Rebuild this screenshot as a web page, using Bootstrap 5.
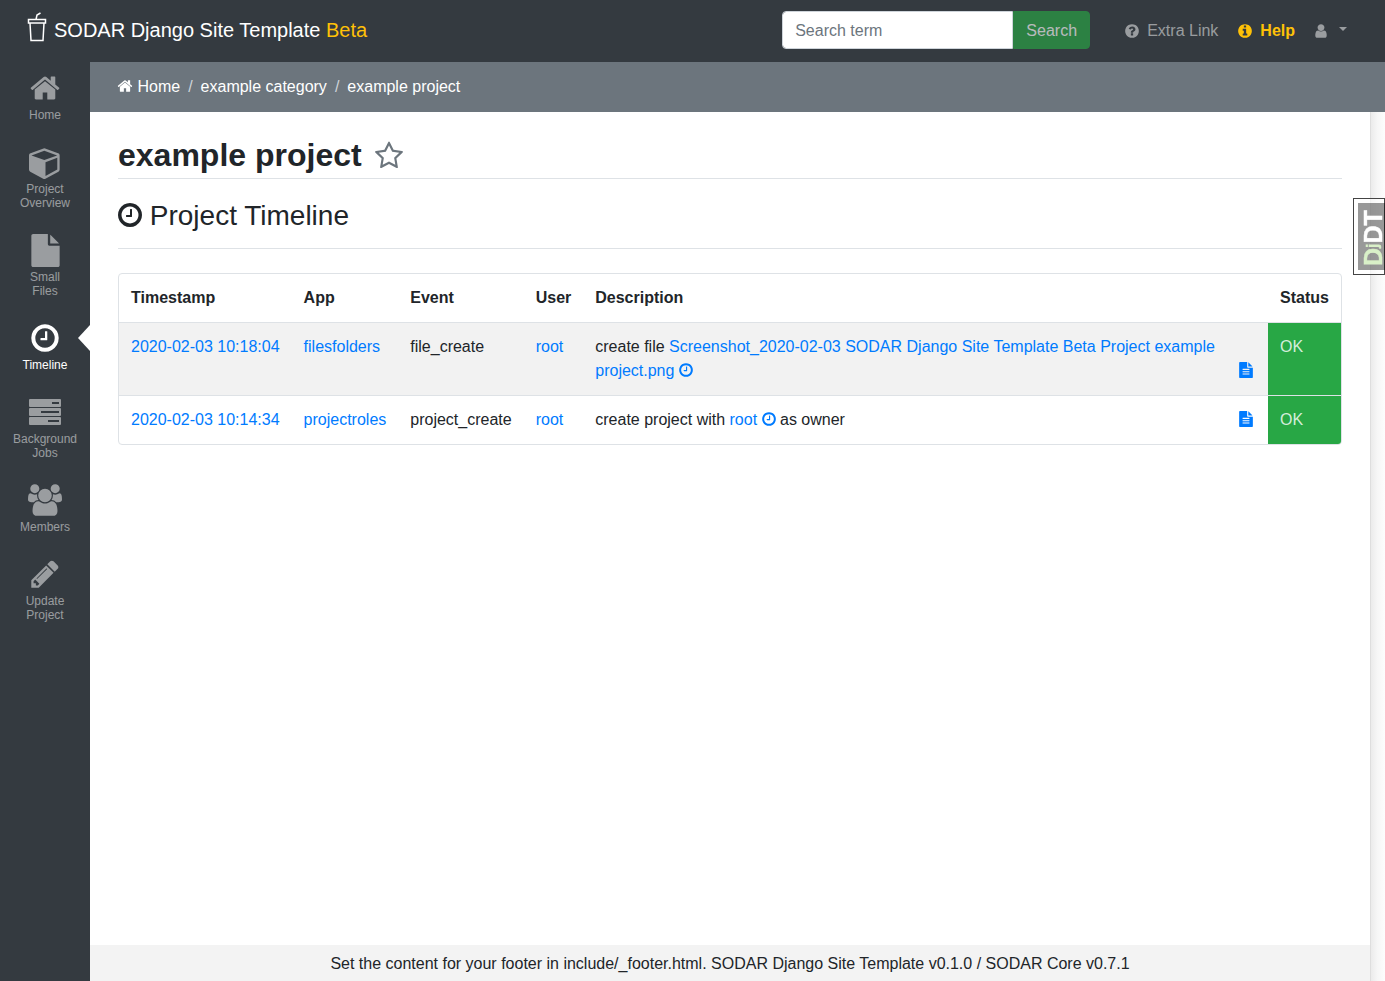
<!DOCTYPE html>
<html lang="en">

<head>
    <meta charset="UTF-8">
    <meta name="viewport" content="width=device-width, initial-scale=1.0">
    <title>Project Timeline</title>
    <link href="https://cdn.jsdelivr.net/npm/bootstrap@5.3.0/dist/css/bootstrap.min.css" rel="stylesheet">
    <style>
        html, body {
            height: 100%;
            overflow: hidden;
        }

        body {
            font-family: "Liberation Sans", Arial, sans-serif;
            font-size: 16px;
            color: #212529;
        }

        a {
            color: #007bff;
            text-decoration: none;
        }

        .fa-icon {
            fill: currentColor;
            vertical-align: -2px;
        }

        .top-bar {
            height: 62px;
            background: #343a40;
            padding: 0 38px 2px 27px;
        }

        .brand-link {
            color: #fff;
            font-size: 20px;
        }

        .beta-text {
            color: #ffc107;
        }

        .cup-logo {
            width: 20px;
            height: 30px;
            margin: 0 7px 6px 0;
        }

        .search-input {
            width: 231px;
            height: 38px;
            border-radius: 4px 0 0 4px;
            font-size: 16px;
            padding: 7px 12px 5px;
            color: #495057;
            border-color: #ced4da;
        }

        .search-input::placeholder {
            color: #6c757d;
        }

        .search-btn,
        .search-btn:disabled {
            background: #28a745;
            border-color: #28a745;
            color: #fff;
            width: 77px;
            height: 38px;
            border-radius: 0 4px 4px 0;
            padding: 2px 0 0;
        }

        .top-link {
            color: rgba(255, 255, 255, .5);
        }

        .help-link {
            color: #ffc107;
            font-weight: 700;
        }

        .extra-gap {
            margin: 2px 0 0 34px;
            gap: 7px;
        }

        .item-gap {
            margin: 2px 0 0 19px;
            gap: 7px;
        }

        .user-gap {
            margin: 2px 0 0 18px;
            gap: 10px;
        }

        .caret-mark {
            display: inline-block;
            border-top: 4.8px solid rgba(255, 255, 255, .5);
            border-left: 4.8px solid transparent;
            border-right: 4.8px solid transparent;
        }

        .main-area {
            height: calc(100vh - 62px);
        }

        .side-nav {
            width: 90px;
            background: #343a40;
            padding-top: 6px;
        }

        .side-link {
            position: relative;
            display: block;
            height: 74px;
            padding-top: 4px;
            text-align: center;
            color: rgba(255, 255, 255, .5);
            font-size: 12px;
            line-height: 14px;
        }

        .side-icon {
            display: flex;
            align-items: center;
            justify-content: center;
            height: 32px;
            margin-bottom: 4px;
        }

        .side-icon svg {
            fill: currentColor;
            flex-shrink: 0;
        }

        .side-tall {
            height: 88px;
        }

        .side-active {
            color: #fff;
        }

        .side-active::after {
            content: "";
            position: absolute;
            right: 0;
            top: 7px;
            border-top: 13px solid transparent;
            border-bottom: 13px solid transparent;
            border-right: 12px solid #fff;
        }

        .page-col {
            min-width: 0;
        }

        .crumb-bar {
            height: 50px;
            background: #6c757d;
            color: #fff;
            padding: 0 27px;
        }

        .crumb-bar a {
            color: #fff;
        }

        .crumb-sep {
            color: #ced4da;
            padding: 0 8px;
        }

        .work-row {
            min-height: 0;
        }

        .work-area {
            min-width: 0;
        }

        .page-scroll {
            width: 15px;
            background: linear-gradient(to right, #ebebeb, #f6f6f6 45%, #fdfdfd);
            border-left: 1px solid #dedede;
        }

        .page-content {
            padding: 0 28px;
        }

        .project-title {
            height: 67px;
            padding-top: 24px;
            margin: 0;
            font-size: 32px;
            font-weight: 700;
            line-height: 38px;
            border-bottom: 1px solid #dee2e6;
        }

        .star-mark {
            color: #6c757d;
            margin-left: 3px;
            vertical-align: -5px;
        }

        .timeline-title {
            height: 70px;
            padding-top: 20px;
            margin: 0 0 24px;
            font-size: 28px;
            font-weight: 400;
            line-height: 34px;
            border-bottom: 1px solid #dee2e6;
        }

        .title-clock {
            margin: 0 -2px;
            vertical-align: -4px;
        }

        .event-clock {
            margin: 0 -1px;
        }

        .timeline-box {
            border: 1px solid #dee2e6;
            border-radius: 4px;
            overflow: hidden;
        }

        .event-table {
            margin: 0;
            --bs-table-bg: transparent;
            color: #212529;
        }

        .event-table th,
        .event-table td {
            padding: 12px;
            line-height: 24px;
            border: 0;
            white-space: nowrap;
            width: 1%;
        }

        .event-table thead th {
            border-bottom: 1px solid #dee2e6;
        }

        .event-table tbody tr + tr td {
            border-top: 1px solid #dee2e6;
        }

        .event-table .desc-cell {
            width: auto;
            white-space: normal;
            padding-right: 14px;
        }

        .striped-row td {
            background: #f2f2f2;
        }

        .event-table .status-ok {
            background: #28a745;
            color: #d4edda;
            min-width: 73px;
        }

        .file-mark {
            color: #007bff;
            flex-shrink: 0;
            margin-bottom: 5px;
        }

        .site-footer {
            height: 36px;
            padding-top: 2px;
            background: #f3f3f3;
            color: #212529;
        }

        .djdt-handle {
            position: fixed;
            top: 198px;
            right: 0;
            width: 32px;
            height: 77px;
            border: 1px solid #444;
            background: rgba(255, 255, 255, .6);
            padding: 4px 0 4px 4px;
        }

        .djdt-inner {
            display: flex;
            align-items: center;
            justify-content: center;
            height: 100%;
            padding: 0 3px 4px 0;
            background: rgba(0, 0, 0, .4);
            color: #fff;
            font-size: 25px;
            font-weight: 700;
            line-height: 1;
            -webkit-text-stroke: .4px;
            writing-mode: vertical-rl;
            transform: rotate(180deg);
        }

        .djdt-inner span {
            color: #d9f0c8;
        }

        .djdt-inner small {
            font-size: 16px;
        }
    </style>
</head>

<body>
    <svg width="0" height="0" class="position-absolute">
        <defs>
            <symbol id="i-home" viewBox="0 0 1792 1792"><path d="M1472 992v480q0 26-19 45t-45 19h-384v-384h-256v384h-384q-26 0-45-19t-19-45v-480q0-1 .5-3t.5-3l575-474 575 474q1 2 1 6zm223-69l-62 74q-8 9-21 11h-3q-13 0-21-7l-692-577-692 577q-12 8-24 7-13-2-21-11l-62-74q-8-10-7-23.500t11-21.500l719-599q32-26 76-26t76 26l244 204v-195q0-14 9-23t23-9h192q14 0 23 9t9 23v408l219 182q10 8 11 21.500t-7 23.500z"/></symbol>
            <symbol id="i-clock" viewBox="0 0 1792 1792"><path d="M1024 544v448q0 14-9 23t-23 9h-320q-14 0-23-9t-9-23v-64q0-14 9-23t23-9h224v-352q0-14 9-23t23-9h64q14 0 23 9t9 23zm416 352q0-148-73-273t-198-198-273-73-273 73-198 198-73 273 73 273 198 198 273 73 273-73 198-198 73-273zm224 0q0 209-103 385.500t-279.500 279.500-385.500 103-385.500-103-279.500-279.500-103-385.500 103-385.500 279.500-279.500 385.500-103 385.500 103 279.500 279.500 103 385.500z"/></symbol>
            <symbol id="i-file" viewBox="0 0 1792 1792"><path d="M1152 512v-472q22 14 36 28l408 408q14 14 28 36h-472zm-128 32q0 40 28 68t68 28h544v1056q0 40-28 68t-68 28h-1344q-40 0-68-28t-28-68v-1600q0-40 28-68t68-28h800v544z"/></symbol>
            <symbol id="i-file-text" viewBox="0 0 1792 1792"><path d="M1596 476q14 14 28 36h-472v-472q22 14 36 28zm-476 164h544v1056q0 40-28 68t-68 28h-1344q-40 0-68-28t-28-68v-1600q0-40 28-68t68-28h800v544q0 40 28 68t68 28zm160 736v-64q0-14-9-23t-23-9h-704q-14 0-23 9t-9 23v64q0 14 9 23t23 9h704q14 0 23-9t9-23zm0-256v-64q0-14-9-23t-23-9h-704q-14 0-23 9t-9 23v64q0 14 9 23t23 9h704q14 0 23-9t9-23zm0-256v-64q0-14-9-23t-23-9h-704q-14 0-23 9t-9 23v64q0 14 9 23t23 9h704q14 0 23-9t9-23z"/></symbol>
            <symbol id="i-star" viewBox="0 0 1792 1792"><path d="M1201 1004l306-297-422-62-189-382-189 382-422 62 306 297-73 421 378-199 377 199zm527-357q0 22-26 48l-363 354 86 500q1 7 1 20 0 50-41 50-19 0-40-12l-449-236-449 236q-22 12-40 12-21 0-31.500-14.500t-10.500-35.500q0-6 2-20l86-500-364-354q-25-27-25-48 0-37 56-46l502-73 225-455q19-41 49-41t49 41l225 455 502 73q56 9 56 46z"/></symbol>
            <symbol id="i-question" viewBox="0 0 1792 1792"><path d="M1024 1376v-192q0-14-9-23t-23-9h-192q-14 0-23 9t-9 23v192q0 14 9 23t23 9h192q14 0 23-9t9-23zm256-672q0-88-55.500-163t-138.500-116-170-41q-243 0-371 213-15 24 8 42l132 100q7 6 19 6 16 0 25-12 53-68 86-92 34-24 86-24 48 0 85.500 26t37.500 59q0 38-20 61t-68 45q-63 28-115.500 86.500t-52.500 125.500v36q0 14 9 23t23 9h192q14 0 23-9t9-23q0-19 21.500-49.500t54.500-49.500q32-18 49-28.500t46-35 44.500-48 28-60.500 12.500-81zm384 192q0 209-103 385.500t-279.500 279.500-385.500 103-385.500-103-279.500-279.500-103-385.500 103-385.500 279.500-279.500 385.500-103 385.500 103 279.500 279.500 103 385.500z"/></symbol>
            <symbol id="i-info" viewBox="0 0 1792 1792"><path d="M1152 1376v-160q0-14-9-23t-23-9h-96v-512q0-14-9-23t-23-9h-320q-14 0-23 9t-9 23v160q0 14 9 23t23 9h96v320h-96q-14 0-23 9t-9 23v160q0 14 9 23t23 9h448q14 0 23-9t9-23zm-128-896v-160q0-14-9-23t-23-9h-192q-14 0-23 9t-9 23v160q0 14 9 23t23 9h192q14 0 23-9t9-23zm640 416q0 209-103 385.500t-279.500 279.500-385.500 103-385.500-103-279.500-279.500-103-385.500 103-385.500 279.500-279.500 385.500-103 385.500 103 279.500 279.500 103 385.500z"/></symbol>
            <symbol id="i-user" viewBox="0 0 1792 1792"><path d="M1536 1399q0 109-62.500 187t-150.500 78h-854q-88 0-150.500-78t-62.500-187q0-85 8.500-160.500t31.500-152 58.500-131 94-89 134.500-34.500q131 128 313 128t313-128q76 0 134.500 34.500t94 89 58.500 131 31.500 152 8.500 160.500zm-256-887q0 159-112.500 271.500t-271.500 112.500-271.500-112.500-112.500-271.500 112.500-271.500 271.500-112.500 271.500 112.500 112.500 271.500z"/></symbol>
            <symbol id="i-users" viewBox="0 0 1920 1792"><path d="M593 896q-162 5-265 128h-134q-82 0-138-40.500t-56-118.500q0-353 124-353 6 0 43.500 21t97.500 42.500 119 21.500q67 0 133-23-5 37-5 66 0 139 81 256zm1071 637q0 120-73 189.500t-194 69.500h-874q-121 0-194-69.500t-73-189.500q0-53 3.500-103.500t14-109 26.500-108.500 43-97.500 62-81 85.500-53.500 111.500-20q10 0 43 21.500t73 48 107 48 135 21.500 135-21.500 107-48 73-48 43-21.500q61 0 111.500 20t85.500 53.500 62 81 43 97.500 26.500 108.500 14 109 3.500 103.500zm-1024-1277q0 106-75 181t-181 75-181-75-75-181 75-181 181-75 181 75 75 181zm704 384q0 159-112.500 271.500t-271.500 112.500-271.500-112.500-112.500-271.500 112.500-271.500 271.500-112.500 271.500 112.500 112.500 271.500zm576 225q0 78-56 118.500t-138 40.500h-134q-103-123-265-128 81-117 81-256 0-29-5-66 66 23 133 23 59 0 119-21.500t97.500-42.500 43.500-21q124 0 124 353zm-128-609q0 106-75 181t-181 75-181-75-75-181 75-181 181-75 181 75 75 181z"/></symbol>
            <symbol id="i-pencil" viewBox="0 0 1792 1792"><path d="M491 1536l91-91-235-235-91 91v107h128v128h107zm523-928q0-22-22-22-10 0-17 7l-542 542q-7 7-7 17 0 22 22 22 10 0 17-7l542-542q7-7 7-17zm-54-192l416 416-832 832h-416v-416zm683 96q0 53-37 90l-166 166-416-416 166-165q36-38 90-38 53 0 91 38l235 234q37 39 37 91z"/></symbol>
            <symbol id="i-cube" viewBox="0 0 1792 1792"><path d="M896 1629l640-349v-636l-640 233v752zm-64-865l698-254-698-254-698 254zm832-252v768q0 35-18 65t-49 47l-704 384q-28 16-61 16t-61-16l-704-384q-31-17-49-47t-18-65v-768q0-40 23-73t61-47l704-256q22-8 44-8t44 8l704 256q38 14 61 47t23 73z"/></symbol>
            <symbol id="i-server" viewBox="0 0 32 26"><path fill-rule="evenodd" d="M1 0h30a1 1 0 0 1 1 1v6a1 1 0 0 1-1 1H1a1 1 0 0 1-1-1V1a1 1 0 0 1 1-1zm22 3v2h7V3zM1 9h30a1 1 0 0 1 1 1v6a1 1 0 0 1-1 1H1a1 1 0 0 1-1-1v-6a1 1 0 0 1 1-1zm11 3v2h18v-2zM1 18h30a1 1 0 0 1 1 1v6a1 1 0 0 1-1 1H1a1 1 0 0 1-1-1v-6a1 1 0 0 1 1-1zm18 3v2h11v-2z"/></symbol>
        </defs>
    </svg>

    <!-- Top bar -->
    <nav class="top-bar d-flex align-items-center">
        <a class="brand-link d-flex align-items-center" href="#">
            <svg class="cup-logo" viewBox="0 0 20 30" fill="none" stroke="#fff" stroke-width="1.5">
                <path d="M1.500 7.500h17v3.500h-17zM3 11l1 17.500h12l1-17.500M9 7.500l1-4.500 3.500-2"/>
            </svg>
            <span>SODAR Django Site Template <span class="beta-text">Beta</span></span>
        </a>
        <form class="d-flex ms-auto" onsubmit="return false">
            <input class="form-control search-input" type="text" placeholder="Search term">
            <button class="btn search-btn" type="button" disabled>Search</button>
        </form>
        <a class="top-link d-flex align-items-center extra-gap" href="#">
            <svg class="fa-icon" width="16" height="16"><use href="#i-question"/></svg>Extra Link
        </a>
        <a class="help-link d-flex align-items-center item-gap" href="#">
            <svg class="fa-icon" width="16" height="16"><use href="#i-info"/></svg>Help
        </a>
        <a class="top-link d-flex align-items-center user-gap" href="#">
            <svg class="fa-icon" width="16" height="16"><use href="#i-user"/></svg><i class="caret-mark mb-1"></i>
        </a>
    </nav>

    <div class="main-area d-flex">
        <!-- Sidebar -->
        <nav class="side-nav flex-shrink-0">
            <a class="side-link" href="#"><span class="side-icon"><svg width="32" height="32"><use href="#i-home"/></svg></span>Home</a>
            <a class="side-link side-tall" href="#"><span class="side-icon"><svg width="33" height="33"><use href="#i-cube"/></svg></span>Project<br>Overview</a>
            <a class="side-link side-tall" href="#"><span class="side-icon"><svg width="33" height="33"><use href="#i-file"/></svg></span>Small<br>Files</a>
            <a class="side-link side-active" href="#"><span class="side-icon"><svg width="32" height="32"><use href="#i-clock"/></svg></span>Timeline</a>
            <a class="side-link side-tall" href="#"><span class="side-icon"><svg width="32" height="26"><use href="#i-server"/></svg></span>Background<br>Jobs</a>
            <a class="side-link" href="#"><span class="side-icon"><svg width="34" height="32"><use href="#i-users"/></svg></span>Members</a>
            <a class="side-link side-tall" href="#"><span class="side-icon"><svg width="32" height="32"><use href="#i-pencil"/></svg></span>Update<br>Project</a>
        </nav>

        <div class="page-col d-flex flex-column flex-grow-1">
            <div class="crumb-bar d-flex align-items-center flex-shrink-0">
                <a href="#"><svg class="fa-icon" width="16" height="16"><use href="#i-home"/></svg> Home</a>
                <span class="crumb-sep">/</span>
                <a href="#">example category</a>
                <span class="crumb-sep">/</span>
                <span>example project</span>
            </div>

            <div class="work-row d-flex flex-grow-1">
                <div class="work-area d-flex flex-column flex-grow-1">
                    <main class="page-content flex-grow-1">
                        <h2 class="project-title">example project
                            <svg class="star-mark fa-icon" width="30" height="30"><use href="#i-star"/></svg>
                        </h2>
                        <h3 class="timeline-title">
                            <svg class="fa-icon title-clock" width="28" height="28"><use href="#i-clock"/></svg>
                            Project Timeline
                        </h3>

                        <div class="timeline-box">
                            <table class="table event-table">
                                <thead>
                                    <tr>
                                        <th>Timestamp</th>
                                        <th>App</th>
                                        <th>Event</th>
                                        <th>User</th>
                                        <th class="desc-cell">Description</th>
                                        <th>Status</th>
                                    </tr>
                                </thead>
                                <tbody>
                                    <tr class="striped-row">
                                        <td><a href="#">2020-02-03 10:18:04</a></td>
                                        <td><a href="#">filesfolders</a></td>
                                        <td>file_create</td>
                                        <td><a href="#">root</a></td>
                                        <td class="desc-cell">
                                            <div class="d-flex align-items-end justify-content-between gap-3">
                                                <div>create file <a href="#">Screenshot_2020-02-03 SODAR Django Site Template Beta Project example project.png <svg class="fa-icon event-clock" width="16" height="16"><use href="#i-clock"/></svg></a></div>
                                                <svg class="file-mark fa-icon" width="16" height="16"><use href="#i-file-text"/></svg>
                                            </div>
                                        </td>
                                        <td class="status-ok">OK</td>
                                    </tr>
                                    <tr>
                                        <td><a href="#">2020-02-03 10:14:34</a></td>
                                        <td><a href="#">projectroles</a></td>
                                        <td>project_create</td>
                                        <td><a href="#">root</a></td>
                                        <td class="desc-cell">
                                            <div class="d-flex align-items-end justify-content-between gap-3">
                                                <div>create project with <a href="#">root <svg class="fa-icon event-clock" width="16" height="16"><use href="#i-clock"/></svg></a> as owner</div>
                                                <svg class="file-mark fa-icon" width="16" height="16"><use href="#i-file-text"/></svg>
                                            </div>
                                        </td>
                                        <td class="status-ok">OK</td>
                                    </tr>
                                </tbody>
                            </table>
                        </div>
                    </main>
                    <footer class="site-footer d-flex align-items-center justify-content-center flex-shrink-0">
                        Set the content for your footer in include/_footer.html. SODAR Django Site Template v0.1.0 / SODAR Core v0.7.1
                    </footer>
                </div>
                <div class="page-scroll flex-shrink-0"></div>
            </div>
        </div>
    </div>

    <div class="djdt-handle">
        <div class="djdt-inner"><div><span>D<small>j</small></span>DT</div></div>
    </div>

    <script src="https://cdn.jsdelivr.net/npm/bootstrap@5.3.0/dist/js/bootstrap.bundle.min.js"></script>
</body>

</html>
